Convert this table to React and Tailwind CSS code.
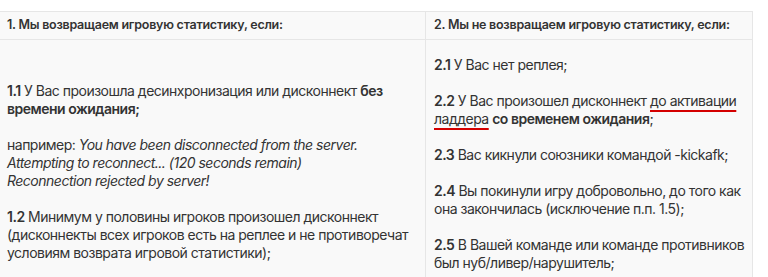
const font = { fontFamily: "Inter, 'Noto Sans', sans-serif" };

const Para = ({ children }) => <p className="mb-[18px]">{children}</p>;

export default function App() {
  return (
    <div className="w-[768px] h-[277px] overflow-hidden bg-white text-[#333]" style={font}>
      <div className="mt-[11px] w-[753px] border-t border-r border-[#e6e6e6] bg-[#f9f9f9]">
        <div className="grid grid-cols-[426px_326px] border-b border-[#e6e6e6] text-[12.5px] font-semibold h-[28px] items-center tracking-[-0.25px]">
          <div className="pl-[7px] h-full flex items-center border-r border-[#e6e6e6]">
            1. Мы возвращаем игровую статистику, если:
          </div>
          <div className="pl-[8px]">2. Мы не возвращаем игровую статистику, если:</div>
        </div>
        <div className="grid grid-cols-[426px_326px] text-[14px] leading-[18px] tracking-[-0.5px]">
          <div className="pl-[7px] pr-[10px] pt-[42px] border-r border-[#e6e6e6]">
            <Para>
              <b className="font-semibold">1.1</b> У Вас произошла десинхронизация или дисконнект{" "}
              <b className="font-semibold">без времени ожидания;</b>
            </Para>
            <Para>
              например: <i>You have been disconnected from the server.<br />Attempting to reconnect... (120 seconds remain)<br />Reconnection rejected by server!</i>
            </Para>
            <Para>
              <b className="font-semibold">1.2</b> Минимум у половины игроков произошел дисконнект (дисконнекты всех игроков есть на реплее и не противоречат условиям возврата игровой статистики);
            </Para>
          </div>
          <div className="pl-[8px] pr-[3px] pt-[16px]">
            <Para>
              <b className="font-semibold">2.1</b> У Вас нет реплея;
            </Para>
            <Para>
              <b className="font-semibold">2.2</b> У Вас произошел дисконнект{" "}
              <span className="underline decoration-[#d40000] decoration-2 underline-offset-[4px]">до активации ладдера</span>{" "}
              <b className="font-semibold">со временем ожидания</b>;
            </Para>
            <Para>
              <b className="font-semibold">2.3</b> Вас кикнули союзники командой <span className="whitespace-nowrap">-kickafk;</span>
            </Para>
            <Para>
              <b className="font-semibold">2.4</b> Вы покинули игру добровольно, до того как она закончилась (исключение п.п. 1.5);
            </Para>
            <Para>
              <b className="font-semibold">2.5</b> В Вашей команде или команде противников был нуб/ливер/нарушитель;
            </Para>
          </div>
        </div>
      </div>
    </div>
  );
}
